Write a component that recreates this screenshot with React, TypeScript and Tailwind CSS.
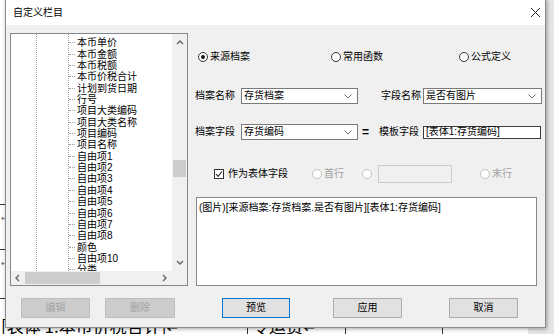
import React from "react";

const ITEMS = [
  "本币单价", "本币金额", "本币税额", "本币价税合计", "计划到货日期", "行号",
  "项目大类编码", "项目大类名称", "项目编码", "项目名称", "自由项1", "自由项2",
  "自由项3", "自由项4", "自由项5", "自由项6", "自由项7", "自由项8", "颜色",
  "自由项10", "分类",
];

const Chevron = ({ dir }: { dir: "up" | "down" | "left" | "right" }) => {
  const d = {
    up: "M1 5 L4 2 L7 5",
    down: "M1 2 L4 5 L7 2",
    left: "M5 1 L2 4 L5 7",
    right: "M2 1 L5 4 L2 7",
  }[dir];
  return (
    <svg width="8" height="8" viewBox="0 0 8 8">
      <path d={d} fill="none" stroke="#606060" strokeWidth="1.3" />
    </svg>
  );
};

const Radio = ({ checked, disabled, label }: { checked?: boolean; disabled?: boolean; label?: string }) => (
  <div className="flex items-center gap-[2px]">
    <div
      className={`w-[10px] h-[10px] rounded-full border bg-white flex items-center justify-center ${
        disabled ? "border-[#c4c4c4]" : "border-[#333333]"
      }`}
    >
      {checked && <div className="w-[4px] h-[4px] rounded-full bg-[#1a1a1a]" />}
    </div>
    {label && <span className={disabled ? "text-[#a0a0a0]" : "text-black"}>{label}</span>}
  </div>
);

const Combo = ({ value, w }: { value: string; w: string }) => (
  <div className={`${w} h-[16px] border border-[#7a7a7a] bg-white flex items-center justify-between pl-[2px] pr-[5px]`}>
    <span>{value}</span>
    <svg width="8" height="5" viewBox="0 0 8 5">
      <path d="M0.5 0.5 L4 4 L7.5 0.5" fill="none" stroke="#707070" strokeWidth="1" />
    </svg>
  </div>
);

const Btn = ({ label, w, disabled, def }: { label: string; w: string; disabled?: boolean; def?: boolean }) => (
  <div
    className={`${w} h-[20px] flex items-center justify-center border ${
      disabled
        ? "bg-[#cccccc] border-[#bfbfbf] text-[#a3a3a3]"
        : def
        ? "bg-[#e1e1e1] border-[#0078d7] text-black"
        : "bg-[#e1e1e1] border-[#adadad] text-black"
    }`}
  >
    {label}
  </div>
);

export default function App() {
  return (
    <div className="relative w-[554px] h-[334px] overflow-hidden bg-white font-['Liberation_Sans','Noto_Sans_CJK_SC',sans-serif] text-[10px] leading-[12px] text-black">
      {/* document behind the dialog */}
      <div className="absolute inset-0 flex">
        <div className="w-[528px] flex flex-col bg-white">
          <div className="h-[208px]" />
          <div className="h-[45px] border-t border-[#333] pt-[8px] pl-[1px] text-[8px] text-[#555]">↵</div>
          <div className="h-[50px] border-t border-[#333] pt-[8px] pl-[1px] text-[8px] text-[#555]">↵</div>
          <div className="flex-1 border-t border-[#333] flex font-['Noto_Sans_CJK_SC',serif] text-[17px] leading-[17px]">
            <div className="w-[247px] pt-[18px] pl-[1px] whitespace-nowrap">[表体 1:本币价税合计]↵</div>
            <div className="w-[98px] border-l border-[#333] pt-[18px] pl-[4px] whitespace-nowrap">令运费↵</div>
            <div className="w-[97px] border-l border-[#333]" />
            <div className="flex-1 border-l border-[#333]" />
          </div>
        </div>
        <div className="flex-1 bg-[#e6e6e6]" />
      </div>

      {/* dialog window */}
      <div className="absolute left-[5px] top-[-1px] w-[541px] h-[329px] border border-[#8c8c8c] bg-[#f0f0f0] shadow-[1px_1px_4px_rgba(0,0,0,0.35)] flex flex-col">
        {/* title bar */}
        <div className="h-[25px] bg-white flex items-center justify-between pl-[7px] pr-[4px]">
          <span>自定义栏目</span>
          <svg width="11" height="11" viewBox="0 0 11 11">
            <path d="M1 1 L10 10 M10 1 L1 10" stroke="#222" strokeWidth="1" />
          </svg>
        </div>

        {/* body */}
        <div className="h-[273px] flex">
          {/* tree list */}
          <div className="ml-[4px] mt-[8px] w-[178px] h-[253px] border border-[#828790] bg-white flex flex-col">
            <div className="flex h-[237px]">
              <div className="flex-1 flex overflow-hidden">
                <div className="w-[25px]" />
                <div className="w-[32px] border-l border-dotted border-[#a0a0a0]" />
                <div className="flex-1 border-l border-dotted border-[#a0a0a0] pt-[3px]">
                  {ITEMS.map((it) => (
                    <div key={it} className="h-[11.37px] flex items-center">
                      <div className="w-[6px] border-t border-dotted border-[#a0a0a0]" />
                      <span className="ml-[2px] leading-[11px] whitespace-nowrap">{it}</span>
                    </div>
                  ))}
                </div>
              </div>
              <div className="w-[15px] bg-[#f0f0f0] flex flex-col">
                <div className="h-[17px] flex items-center justify-center">
                  <Chevron dir="up" />
                </div>
                <div className="flex-1">
                  <div className="mt-[109px] mx-[1px] h-[17px] bg-[#cdcdcd]" />
                </div>
                <div className="h-[17px] flex items-center justify-center">
                  <Chevron dir="down" />
                </div>
              </div>
            </div>
            <div className="flex-1 flex bg-[#f0f0f0]">
              <div className="w-[14px] flex items-center justify-center">
                <Chevron dir="left" />
              </div>
              <div className="w-[75px] my-[1px] bg-[#cdcdcd]" />
              <div className="flex-1" />
              <div className="w-[14px] flex items-center justify-center">
                <Chevron dir="right" />
              </div>
              <div className="w-[15px]" />
            </div>
          </div>

          {/* right panel */}
          <div className="flex-1 pl-[7px] flex flex-col">
            <div className="mt-[26px] h-[12px] flex items-center pl-[3px]">
              <div className="w-[133px]">
                <Radio checked label="来源档案" />
              </div>
              <div className="w-[128px]">
                <Radio label="常用函数" />
              </div>
              <Radio label="公式定义" />
            </div>

            <div className="mt-[25px] h-[16px] flex items-center">
              <span className="w-[46px]">档案名称</span>
              <Combo value="存货档案" w="w-[117px]" />
              <span className="ml-[23px] w-[42px]">字段名称</span>
              <Combo value="是否有图片" w="w-[119px]" />
            </div>

            <div className="mt-[20px] h-[16px] flex items-center">
              <span className="w-[46px]">档案字段</span>
              <Combo value="存货编码" w="w-[117px]" />
              <span className="w-[21px] pl-[4px] font-bold text-[12px]">=</span>
              <span className="w-[44px]">模板字段</span>
              <div className="w-[118px] h-[13px] border border-[#3c3c3c] bg-white flex items-center pl-[2px]">
                [表体1:存货编码]
              </div>
            </div>

            <div className="mt-[25px] h-[18px] flex items-center">
              <div className="ml-[19px] w-[10px] h-[10px] border border-[#333] bg-white flex items-center justify-center">
                <svg width="8" height="8" viewBox="0 0 8 8">
                  <path d="M1 4 L3 6.3 L7 1.5" fill="none" stroke="#222" strokeWidth="1.1" />
                </svg>
              </div>
              <span className="ml-[4px] w-[84px]">作为表体字段</span>
              <div className="w-[50px]">
                <Radio disabled label="首行" />
              </div>
              <Radio disabled />
              <div className="ml-[6px] w-[74px] h-[18px] border border-[#cccccc] bg-[#f0f0f0]" />
              <div className="ml-[28px]">
                <Radio disabled label="末行" />
              </div>
            </div>

            <div className="mt-[14px] ml-[1px] w-[341px] h-[89px] border border-[#828790] bg-white pl-[2px] pt-[4px] whitespace-nowrap">
              (图片)[来源档案:存货档案.是否有图片][表体1:存货编码]
            </div>
          </div>
        </div>

        {/* buttons */}
        <div className="h-[20px] flex">
          <div className="ml-[15px]">
            <Btn label="编辑" w="w-[69px]" disabled />
          </div>
          <div className="ml-[15px]">
            <Btn label="删除" w="w-[70px]" disabled />
          </div>
          <div className="ml-[47px]">
            <Btn label="预览" w="w-[68px]" def />
          </div>
          <div className="ml-[43px]">
            <Btn label="应用" w="w-[69px]" />
          </div>
          <div className="ml-[47px]">
            <Btn label="取消" w="w-[69px]" />
          </div>
        </div>
      </div>
    </div>
  );
}
